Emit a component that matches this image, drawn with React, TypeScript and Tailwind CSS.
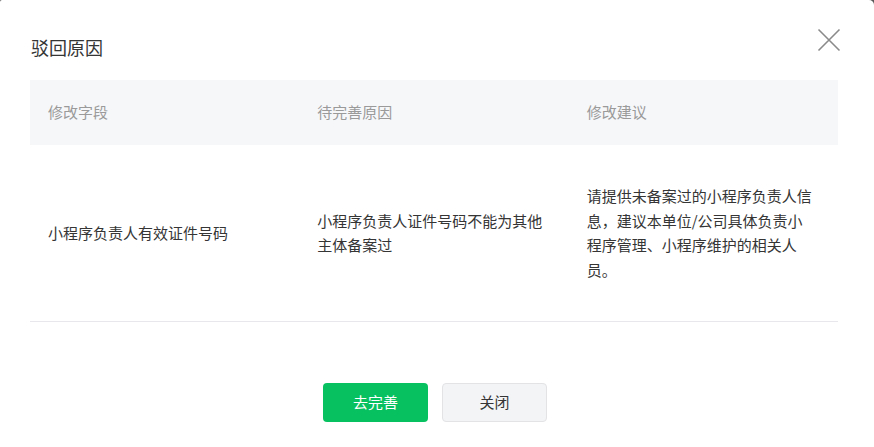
import React from 'react';

const font = { fontFamily: '"Noto Sans CJK SC", "Noto Sans", sans-serif' };

const rows = [
  {
    field: '小程序负责人有效证件号码',
    reason: '小程序负责人证件号码不能为其他主体备案过',
    advice: '请提供未备案过的小程序负责人信息，建议本单位/公司具体负责小程序管理、小程序维护的相关人员。',
  },
];

function CloseIcon() {
  return (
    <svg width="24" height="24" viewBox="0 0 24 24" fill="none" stroke="#8a8a8a" strokeWidth="1.6">
      <path d="M1.5 1.5L22.5 22.5M22.5 1.5L1.5 22.5" />
    </svg>
  );
}

export default function App() {
  return (
    <div className="h-[447px] w-[874px] overflow-hidden bg-[#5a5a5a]" style={font}>
      <div className="relative flex h-full w-full flex-col rounded-tl-[2px] rounded-tr-[5px] bg-white pl-[30px] pr-[36px] pt-[35px]">
        <h2 className="text-[18px] leading-[24px] text-[#353535] pl-px">驳回原因</h2>
        <button className="absolute right-[33px] top-[28px]" aria-label="关闭">
          <CloseIcon />
        </button>

        <div className="mt-[21px]">
          <div className="grid h-[65px] grid-cols-3 items-center bg-[#f6f7f9] text-[15px] text-[#9a9a9a]">
            <div className="pl-[18px]">修改字段</div>
            <div className="pl-[18px]">待完善原因</div>
            <div className="pl-[18px]">修改建议</div>
          </div>
          {rows.map((r) => (
            <div
              key={r.field}
              className="grid h-[177px] grid-cols-3 items-center border-b border-[#e8e8ec] text-[15px] leading-[24.5px] text-[#353535]"
            >
              <div className="pl-[18px] pr-[24px]">{r.field}</div>
              <div className="pl-[18px] pr-[24px]">{r.reason}</div>
              <div className="pl-[18px] pr-[24px]">{r.advice}</div>
            </div>
          ))}
        </div>

        <div className="mt-[61px] flex justify-center gap-[14px] pl-[2px]">
          <button className="h-[39px] w-[105px] rounded-[4px] bg-[#07c160] text-[15px] text-white">去完善</button>
          <button className="h-[39px] w-[105px] rounded-[4px] border border-[#e3e3e6] bg-[#f3f4f6] text-[15px] text-[#353535]">
            关闭
          </button>
        </div>
      </div>
    </div>
  );
}
